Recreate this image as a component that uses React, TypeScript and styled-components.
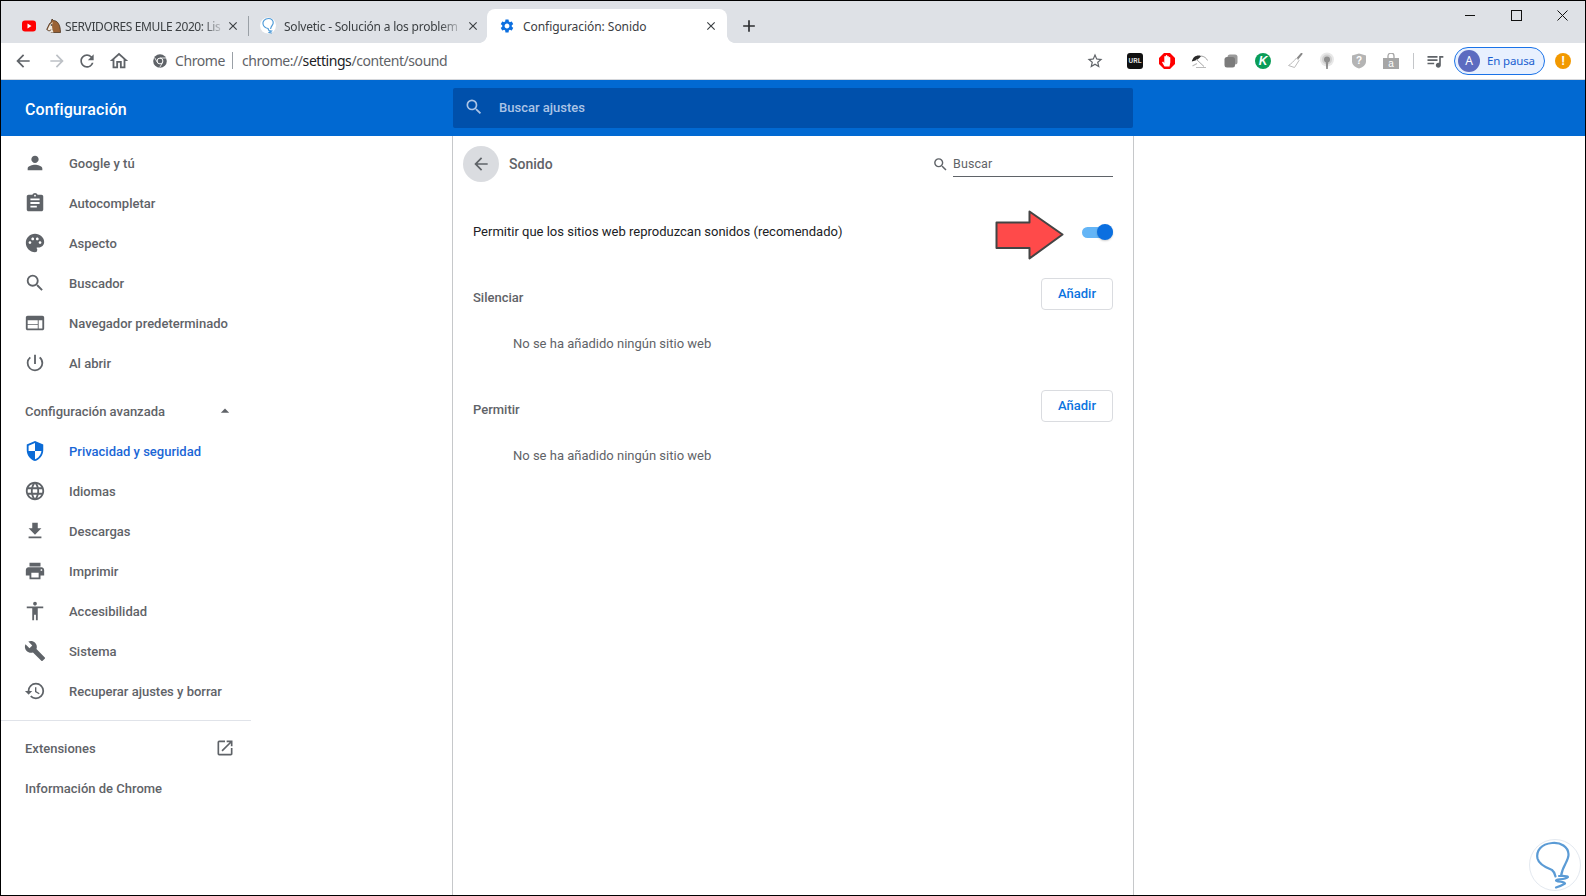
import React from "react";
import styled, { createGlobalStyle } from "styled-components";
import {
  MdPerson, MdAssignment, MdPalette, MdSearch, MdWeb, MdPowerSettingsNew, MdSecurity, MdLanguage,
  MdFileDownload, MdPrint, MdAccessibility, MdBuild, MdRestore, MdOpenInNew, MdArrowDropUp, MdArrowBack,
  MdArrowForward, MdRefresh, MdOutlineHome, MdStarBorder, MdQueueMusic, MdSettings, MdClose, MdAdd,
} from "react-icons/md";

const Global = createGlobalStyle`
  html, body { margin: 0; padding: 0; background: #fff; overflow: hidden; }
  * { box-sizing: border-box; }
`;

const UI = `"Noto Sans", "Open Sans", sans-serif`;
const RB = `Roboto, "Liberation Sans", sans-serif`;

const Win = styled.div`
  position: relative; width: 1586px; height: 896px; border: 1px solid #000;
  display: flex; flex-direction: column; background: #fff; overflow: hidden; font-family: ${RB};
`;
const Strip = styled.div`
  height: 42px; flex: none; background: #dee1e6; display: flex; align-items: flex-end; padding-left: 8px;
`;
const Tab = styled.div<{ $active?: boolean; $w: number; $pl: number; $sep?: boolean }>`
  position: relative; flex: none; width: ${(p) => p.$w}px; height: 34px; padding-left: ${(p) => p.$pl}px;
  display: flex; align-items: center; border-radius: 8px 8px 0 0;
  background: ${(p) => (p.$active ? "#fff" : "transparent")};
  ${(p) => p.$sep && `&::after { content: ""; position: absolute; right: 0; top: 7px; width: 1px; height: 20px; background: #9aa0a6; }`}
  ${(p) => p.$active && `
    &::before, & > i { content: ""; position: absolute; bottom: 0; width: 8px; height: 8px; }
    &::before { left: -8px; background: radial-gradient(circle at 0 0, #dee1e6 7.6px, #fff 8.2px); }
    & > i { right: -8px; background: radial-gradient(circle at 100% 0, #dee1e6 7.6px, #fff 8.2px); }
  `}
`;
const Fav = styled.span<{ $ml?: number }>`
  flex: none; display: flex; margin-left: ${(p) => p.$ml ?? 0}px;
`;
const TabTitle = styled.span<{ $fade?: boolean; $ml: number; $w: number; $ls?: number }>`
  flex: none; margin-left: ${(p) => p.$ml}px; width: ${(p) => p.$w}px; overflow: hidden; white-space: nowrap;
  font: 400 12px ${UI}; color: #3c4043; letter-spacing: ${(p) => p.$ls ?? -0.05}px;
  ${(p) => p.$fade && `-webkit-mask-image: linear-gradient(90deg, #000 88%, rgba(0,0,0,.15) 100%); mask-image: linear-gradient(90deg, #000 88%, rgba(0,0,0,.15) 100%);`}
`;
const TabClose = styled.span<{ $ml: number }>`
  flex: none; margin-left: ${(p) => p.$ml}px; display: flex; color: #3c4043;
`;
const NewTab = styled.span`
  flex: none; margin: 0 0 7px 12px; width: 20px; height: 20px; display: flex; align-items: center; justify-content: center; color: #2c2e31;
`;
const WinControls = styled.div`
  margin-left: auto; margin-right: -1px; align-self: flex-start; display: flex; height: 28px;
`;
const WinBtn = styled.span`
  width: 46.6px; height: 28px; display: flex; align-items: center; justify-content: center; color: #111;
`;
const Toolbar = styled.div`
  height: 37px; flex: none; display: flex; align-items: center; padding: 0 6px 1px 5px; border-bottom: 1px solid #d5d7db; background: #fff;
`;
const Slot = styled.span<{ $w?: number; $c?: string; $ml?: number }>`
  flex: none; width: ${(p) => p.$w ?? 32}px; height: 28px; margin-left: ${(p) => p.$ml ?? 0}px; display: flex; align-items: center; justify-content: center;
  color: ${(p) => p.$c ?? "#5f6368"};
`;
const Omni = styled.div`
  display: flex; align-items: center; margin-left: 15px; font: 400 14px ${UI}; color: #5f6368; white-space: nowrap;
`;
const OmniChip = styled.span`
  margin-left: 8px; letter-spacing: -0.4px;
`;
const OmniSep = styled.span`
  width: 1px; height: 17px; background: #9aa0a6; margin: 0 9px 0 7px;
`;
const OmniUrl = styled.span`
  letter-spacing: -0.44px;
  b { font-weight: 400; color: #202124; }
`;
const Right = styled.div`
  margin-left: auto; display: flex; align-items: center;
`;
const ExtSep = styled.span`
  width: 1px; height: 16px; background: #c4c6c9; margin: 0 5px 0 6px;
`;
const Pill = styled.div`
  flex: none; width: 91px; height: 28px; margin-left: 3px; border: 1px solid #1a73e8; border-radius: 14px; background: #e8f0fe;
  display: flex; align-items: center; padding-left: 3px; font: 400 11.5px ${UI}; letter-spacing: -0.15px; color: #1a5fd0; white-space: nowrap;
`;
const Avatar = styled.span`
  flex: none; width: 22px; height: 22px; border-radius: 50%; background: #5c6bc0; color: #fff; display: flex; align-items: center; justify-content: center;
  font: 400 12px ${UI}; margin-right: 7px;
`;
const Alert = styled.span`
  width: 16px; height: 16px; border-radius: 50%; background: #f29900; color: #fff; display: flex; align-items: center; justify-content: center; font: 700 12px ${RB};
`;
const UrlBadge = styled.span`
  width: 16px; height: 16px; border-radius: 3px; background: #111; color: #ddd; display: flex; align-items: center; justify-content: center; font: 700 7px ${RB};
`;
const KBadge = styled.span`
  width: 16px; height: 16px; border-radius: 50%; background: #0a9d58; color: #fff; display: flex; align-items: center; justify-content: center; font: italic 700 12px "Liberation Sans", sans-serif;
`;
const Header = styled.header`
  height: 56px; flex: none; display: flex; align-items: center; background: #0169d2;
`;
const AppTitle = styled.div`
  width: 452px; flex: none; padding: 2px 0 0 24px; font: 500 16px ${RB}; letter-spacing: .1px; color: #fff;
`;
const HeaderSearch = styled.div`
  width: 680px; height: 40px; flex: none; background: #0050ab; border-radius: 2px; display: flex; align-items: center; padding: 0 0 2px 11px;
  color: #abc4e6; font: 500 13px ${RB};
  span { margin-left: 15px; }
`;
const Body = styled.div`
  flex: 1; display: flex; min-height: 0;
`;
const Side = styled.nav`
  width: 250px; flex: none; padding-top: 7px; margin-right: 201px;
`;
const Item = styled.div<{ $active?: boolean }>`
  height: 40px; display: flex; align-items: center; padding-left: 23px; font: 500 13px ${RB};
  color: ${(p) => (p.$active ? "#1a66d6" : "#5f6368")};
  svg { flex: none; color: ${(p) => (p.$active ? "#0b6bd6" : "#5f6368")}; }
  span { margin-left: 23px; }
`;
const Plain = styled.div<{ $mt?: number }>`
  height: 40px; margin-top: ${(p) => p.$mt ?? 0}px; display: flex; align-items: center; justify-content: space-between; padding: 0 16px 0 24px; font: 500 13px ${RB}; color: #5f6368;
`;
const Divider = styled.div`
  height: 1px; background: #e0e3e9; margin: 9px 0 7px;
`;
const Panel = styled.main`
  width: 682px; flex: none; border-left: 1px solid #c6c8ca; border-right: 1px solid #c6c8ca; padding: 10px 20px 0 20px; position: relative;
`;
const PanelHead = styled.div`
  display: flex; align-items: center; height: 36px; margin-left: -10px;
`;
const BackBtn = styled.span`
  width: 36px; height: 36px; border-radius: 50%; background: #dadce0; color: #5f6368; display: flex; align-items: center; justify-content: center;
`;
const PanelTitle = styled.span`
  margin-left: 10px; font: 500 14px ${RB}; color: #5f6368;
`;
const SearchWrap = styled.div`
  margin-left: auto; display: flex; align-items: center; color: #5f6368;
`;
const SearchField = styled.div`
  width: 160px; height: 26px; margin-left: 4px; border-bottom: 1px solid #5f6368; font: 400 12.5px/25px ${RB}; color: #5f6368; letter-spacing: .1px;
`;
const ToggleRow = styled.div`
  display: flex; align-items: center; justify-content: space-between; height: 40px; margin-top: 30px; font: 400 13px ${RB}; color: #202124;
  > span:first-child { margin-top: -2px; }
`;
const Toggle = styled.span`
  position: relative; width: 31px; height: 11px; border-radius: 6px; background: #64b5f6;
  &::after { content: ""; position: absolute; right: 0; top: -3px; width: 16px; height: 16px; border-radius: 50%; background: #0b6fe0; box-shadow: 0 1px 2px rgba(0,0,0,.2); }
`;
const ArrowMark = styled.svg`
  position: absolute; left: 540px; top: 73px;
`;
const Section = styled.section<{ $mt?: number }>`
  height: 112px; margin-top: ${(p) => p.$mt ?? 0}px;
`;
const SectionHead = styled.div`
  display: flex; justify-content: space-between; height: 32px; font: 500 13px ${RB}; color: #5f6368;
  > span { padding-top: 10px; line-height: 20px; }
`;
const AddBtn = styled.button`
  width: 72px; height: 32px; border: 1px solid #dadce0; border-radius: 4px; background: #fff; color: #0a73e0; font: 500 13px ${RB}; padding: 0 0 2px;
`;
const Empty = styled.div`
  margin: 24px 0 0 40px; font: 400 13px/20px ${RB}; color: #5f6368;
`;
const Watermark = styled.svg`
  position: absolute; right: 3px; bottom: 3px;
`;

const YouTube = () => (
  <svg width="14" height="12" viewBox="0 0 14 12"><rect width="14" height="11" y=".5" rx="3" fill="#f00" /><path d="M5.5 3.6 9.5 6l-4 2.4z" fill="#fff" /></svg>
);
const Horse = () => (
  <svg width="15" height="16" viewBox="0 0 15 16">
    <path d="M6 1 7.5 2.5C11 2.5 14.5 6 14.5 14.5H5L6.5 11.5C5 12 4 12.6 3 13L.7 11.5 3.5 5.5 5 4.5z" fill="#9a6235" stroke="#3d2614" strokeWidth=".7" />
    <path d="M6.800 4C5.500 7 6 11 7.500 14.500H3.800L5.500 11 3 12.500 1.600 11.400 4 6.500z" fill="#efe9df" />
    <circle cx="5.500" cy="7" r=".8" fill="#222" />
  </svg>
);
const Solv = () => (
  <svg width="16" height="18" viewBox="0 0 16 18">
    <circle cx="8" cy="8.500" r="8" fill="#fff" />
    <path d="M8.500 1.500C4.500 1.500 2.500 4.500 3 7c.5 2.500 3 4 5 4.500.5.500.3 1.300 1 2M8.500 1.500c3 0 5 2 4.700 4.500-.2 2-2 2.700-2.500 5.500M9 13.600l2.400.4-2.200 1.500 2.200.5" fill="none" stroke="#4f9bd8" strokeWidth="1.200" strokeLinecap="round" />
  </svg>
);
const ChromeGlyph = () => (
  <svg width="14" height="14" viewBox="0 0 14 14">
    <circle cx="7" cy="7" r="6.800" fill="#5f6368" />
    <circle cx="7" cy="7" r="2.900" fill="#5f6368" stroke="#fff" strokeWidth="1" />
    <path d="M7 4h6M4.400 8.500 1.600 3.600M9.600 8.500 6.700 13.400" stroke="#fff" strokeWidth=".8" />
  </svg>
);
const AdBlock = () => (
  <svg width="16" height="16" viewBox="0 0 16 16">
    <path d="M5 0h6l5 5v6l-5 5H5l-5-5V5z" fill="#f00" />
    <path d="M5.500 13.500 3 9.200l1.100-.6L5.300 10V3.800a.75.75 0 0 1 1.500 0V2.700a.75.75 0 0 1 1.500 0v1a.75.75 0 0 1 1.500 0v1a.75.75 0 0 1 1.500 0V9.500l-.8 4z" fill="#fff" />
  </svg>
);
const Umbrella = () => (
  <svg width="17" height="16" viewBox="0 0 17 16">
    <path d="M.8 8.500C2 3.500 6 1.500 10 3 8.500 5.500 6 7.500.8 8.500z" fill="#2a2a2a" />
    <path d="M10 3c3 .3 5.500 2 6.500 4.500M5 6l8 7.500" stroke="#999" strokeWidth=".9" fill="none" />
    <path d="M1.500 13 6 10.500M5 14.500h10" stroke="#bbb" strokeWidth="1.200" fill="none" />
  </svg>
);
const Layers = () => (
  <svg width="14" height="14" viewBox="0 0 14 14">
    <rect x="3.500" y=".5" width="10" height="10" rx="2.500" fill="#9a9a9a" />
    <rect x=".5" y="3" width="10.500" height="10.500" rx="2.500" fill="#7b7b7b" />
  </svg>
);
const Brush = () => (
  <svg width="16" height="16" viewBox="0 0 16 16">
    <path d="M11 5 14.500.8" stroke="#888" strokeWidth="2" strokeLinecap="round" />
    <path d="M9.500 5 12 7.500 7.500 14.500 1.500 12.500C4 11 7 8 9.500 5z" fill="#fff" stroke="#bbb" strokeWidth="1" />
  </svg>
);
const Podcast = () => (
  <svg width="18" height="18" viewBox="0 0 18 18">
    <circle cx="9" cy="7.500" r="7" fill="#e8e8e8" />
    <circle cx="9" cy="7.500" r="5" fill="#d0d0d0" />
    <circle cx="9" cy="7.500" r="3" fill="#8e8e8e" />
    <path d="M7.800 10h2.400L9.800 17h-1.600z" fill="#8e8e8e" />
  </svg>
);
const ShieldQ = () => (
  <svg width="14" height="16" viewBox="0 0 14 16">
    <path d="M0 2.500 7 .5l7 2v6c0 3.500-3.500 6-7 7-3.500-1-7-3.500-7-7z" fill="#b4b4b4" />
    <text x="7" y="11" textAnchor="middle" fontFamily="Liberation Sans" fontWeight="700" fontSize="10" fill="#fff">?</text>
  </svg>
);
const Bag = () => (
  <svg width="16" height="16" viewBox="0 0 16 16">
    <path d="M0 5h16v11H0z" fill="#a6a6a6" />
    <path d="M5 5V3a3 3 0 0 1 6 0v2" fill="none" stroke="#a6a6a6" strokeWidth="1.300" />
    <text x="8" y="14" textAnchor="middle" fontFamily="Liberation Sans" fontSize="10" fill="#fff">a</text>
  </svg>
);

const topItems: [React.ComponentType<{ size?: number }>, string][] = [
  [MdPerson, "Google y tú"], [MdAssignment, "Autocompletar"], [MdPalette, "Aspecto"],
  [MdSearch, "Buscador"], [MdWeb, "Navegador predeterminado"], [MdPowerSettingsNew, "Al abrir"],
];
const advItems: [React.ComponentType<{ size?: number }>, string][] = [
  [MdLanguage, "Idiomas"], [MdFileDownload, "Descargas"], [MdPrint, "Imprimir"],
  [MdAccessibility, "Accesibilidad"], [MdBuild, "Sistema"], [MdRestore, "Recuperar ajustes y borrar"],
];

export default function App() {
  return (
    <Win>
      <Global />
      <Strip>
        <Tab $w={240} $pl={13} $sep>
          <Fav><YouTube /></Fav>
          <Fav $ml={10}><Horse /></Fav>
          <TabTitle $fade $ml={4} $w={157} $ls={-0.38}>SERVIDORES EMULE 2020: Lis</TabTitle>
          <TabClose $ml={4}><MdClose size={14} /></TabClose>
        </Tab>
        <Tab $w={238} $pl={11}>
          <Fav><Solv /></Fav>
          <TabTitle $fade $ml={8} $w={177} $ls={-0.22}>Solvetic - Solución a los problem</TabTitle>
          <TabClose $ml={5}><MdClose size={14} /></TabClose>
        </Tab>
        <Tab $w={240} $pl={12} $active>
          <i />
          <Fav><MdSettings size={16} color="#0b6fe0" /></Fav>
          <TabTitle $ml={8} $w={178}>Configuración: Sonido</TabTitle>
          <TabClose $ml={3}><MdClose size={14} /></TabClose>
        </Tab>
        <NewTab><MdAdd size={20} /></NewTab>
        <WinControls>
          <WinBtn><svg width="10" height="10" viewBox="0 0 10 10"><path d="M0 5.500h10" stroke="#111" /></svg></WinBtn>
          <WinBtn><svg width="11" height="11" viewBox="0 0 11 11"><rect x=".5" y=".5" width="10" height="10" fill="none" stroke="#111" /></svg></WinBtn>
          <WinBtn><svg width="11" height="11" viewBox="0 0 11 11"><path d="M.5.500l10 10M10.500.500l-10 10" stroke="#111" /></svg></WinBtn>
        </WinControls>
      </Strip>
      <Toolbar>
        <Slot $w={34}><MdArrowBack size={20} /></Slot>
        <Slot $w={34} $c="#bdc1c6"><MdArrowForward size={20} /></Slot>
        <Slot $w={26}><MdRefresh size={20} /></Slot>
        <Slot $w={38}><MdOutlineHome size={22} /></Slot>
        <Omni>
          <ChromeGlyph />
          <OmniChip>Chrome</OmniChip>
          <OmniSep />
          <OmniUrl>chrome://<b>settings</b>/content/sound</OmniUrl>
        </Omni>
        <Right>
          <Slot $ml={0}><MdStarBorder size={18} /></Slot>
          <Slot $ml={8}><UrlBadge>URL</UrlBadge></Slot>
          <Slot><AdBlock /></Slot>
          <Slot><Umbrella /></Slot>
          <Slot><Layers /></Slot>
          <Slot><KBadge>K</KBadge></Slot>
          <Slot><Brush /></Slot>
          <Slot><Podcast /></Slot>
          <Slot><ShieldQ /></Slot>
          <Slot><Bag /></Slot>
          <ExtSep />
          <Slot><MdQueueMusic size={20} /></Slot>
          <Pill><Avatar>A</Avatar>En pausa</Pill>
          <Slot $ml={2}><Alert>!</Alert></Slot>
        </Right>
      </Toolbar>
      <Header>
        <AppTitle>Configuración</AppTitle>
        <HeaderSearch><MdSearch size={20} />
          <span>Buscar ajustes</span>
        </HeaderSearch>
      </Header>
      <Body>
        <Side>
          {topItems.map(([I, t]) => (
            <Item key={t}><I size={22} /><span>{t}</span></Item>
          ))}
          <Plain $mt={8}>Configuración avanzada<MdArrowDropUp size={20} /></Plain>
          <Item $active><MdSecurity size={22} /><span>Privacidad y seguridad</span></Item>
          {advItems.map(([I, t]) => (
            <Item key={t}><I size={22} /><span>{t}</span></Item>
          ))}
          <Divider />
          <Plain>Extensiones<MdOpenInNew size={20} /></Plain>
          <Plain>Información de Chrome</Plain>
        </Side>
        <Panel>
          <PanelHead>
            <BackBtn><MdArrowBack size={20} /></BackBtn>
            <PanelTitle>Sonido</PanelTitle>
            <SearchWrap>
              <MdSearch size={17} />
              <SearchField>Buscar</SearchField>
            </SearchWrap>
          </PanelHead>
          <ToggleRow>
            <span>Permitir que los sitios web reproduzcan sonidos (recomendado)</span>
            <Toggle />
          </ToggleRow>
          <ArrowMark width="72" height="52" viewBox="0 0 72 52">
            <path d="M3.500 13.500H36.500V2.500L69.500 25.500 36.500 49.500V39H3.500z" fill="#ff4a4a" stroke="#444" strokeWidth="2" strokeLinejoin="round" />
          </ArrowMark>
          <Section $mt={26}>
            <SectionHead><span>Silenciar</span><AddBtn>Añadir</AddBtn></SectionHead>
            <Empty>No se ha añadido ningún sitio web</Empty>
          </Section>
          <Section>
            <SectionHead><span>Permitir</span><AddBtn>Añadir</AddBtn></SectionHead>
            <Empty>No se ha añadido ningún sitio web</Empty>
          </Section>
        </Panel>
      </Body>
      <Watermark width="54" height="54" viewBox="0 0 54 54">
        <circle cx="27" cy="27" r="25.500" fill="#fff" stroke="#e4e9f0" strokeWidth="1" />
        <path d="M24 5C13 6 8 13 9.500 20.500 11 27 19 30 24 32c2 1.500 3 4 3.500 6.500 M24 5c9-1 16 4 16.500 11 .5 7-6 11-7.500 22 M31 38c4 0 8-.5 9 1 -3 3-12 2-12 3.500 3 2 8 .5 9 3-3 2-6 3-9 4" fill="none" stroke="#5b9bd5" strokeWidth="2.200" strokeLinecap="round" strokeLinejoin="round" />
      </Watermark>
    </Win>
  );
}
